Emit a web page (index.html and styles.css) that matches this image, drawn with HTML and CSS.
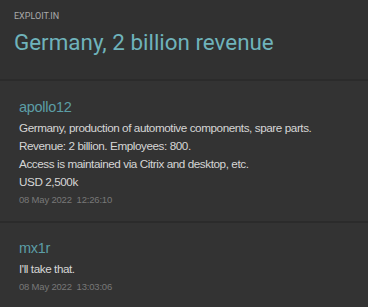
FILE: index.html
```html
<!DOCTYPE html>
<html>
<head>
  <meta charset="utf-8">
  <title>Germany, 2 billion revenue</title>
  <link rel="stylesheet" href="styles.css">
</head>
<body>

<header class="topic-head">
  <div class="forum">EXPLOIT.IN</div>
  <h1 class="topic-title">Germany, 2 billion revenue</h1>
</header>

<main class="posts">
  <article class="post">
    <div class="author">apollo12</div>
    <div class="body">
      <p>Germany, production of automotive components, spare parts.</p>
      <p>Revenue: 2 billion. Employees: 800.</p>
      <p>Access is maintained via Citrix and desktop, etc.</p>
      <p>USD 2,500k</p>
    </div>
    <div class="stamp">08 May 2022&nbsp;&nbsp;12:26:10</div>
  </article>

  <article class="post">
    <div class="author">mx1r</div>
    <div class="body">
      <p>I'll take that.</p>
    </div>
    <div class="stamp">08 May 2022&nbsp;&nbsp;13:03:06</div>
  </article>
</main>

</body>
</html>
```

FILE: styles.css
```css
html { background: #333; }
body { margin: 0; background: #333; font-family: "Liberation Sans", Arial, sans-serif; }

.topic-head { padding: 11px 14px 0; height: 68px; background: #313131; border-bottom: 2px solid #2b2b2b; }
.forum { font-family: Roboto, sans-serif; font-size: 9px; color: #a9a9a9; line-height: 10px; }
.topic-title {
  margin: 8px 0 0;
  font-family: Roboto, sans-serif; font-weight: 400;
  font-size: 22.4px; line-height: 26px;
  color: #6fb3bb;
}

.post { padding: 17px 19px 14px; border-bottom: 2px solid #2b2b2b; }
.post:last-child { border-bottom: 0; }
.author { font-size: 14.5px; letter-spacing: -0.3px; line-height: 18px; color: #5c9ea6; margin-bottom: 3px; }
.body p { margin: 0; font-size: 11.7px; letter-spacing: -0.42px; line-height: 18px; color: #d6d6d6; }
.stamp { font-size: 9.5px; letter-spacing: -0.2px; line-height: 14px; color: #787878; margin-top: 2px; }
.post:last-child { padding-top: 16px; }
```
